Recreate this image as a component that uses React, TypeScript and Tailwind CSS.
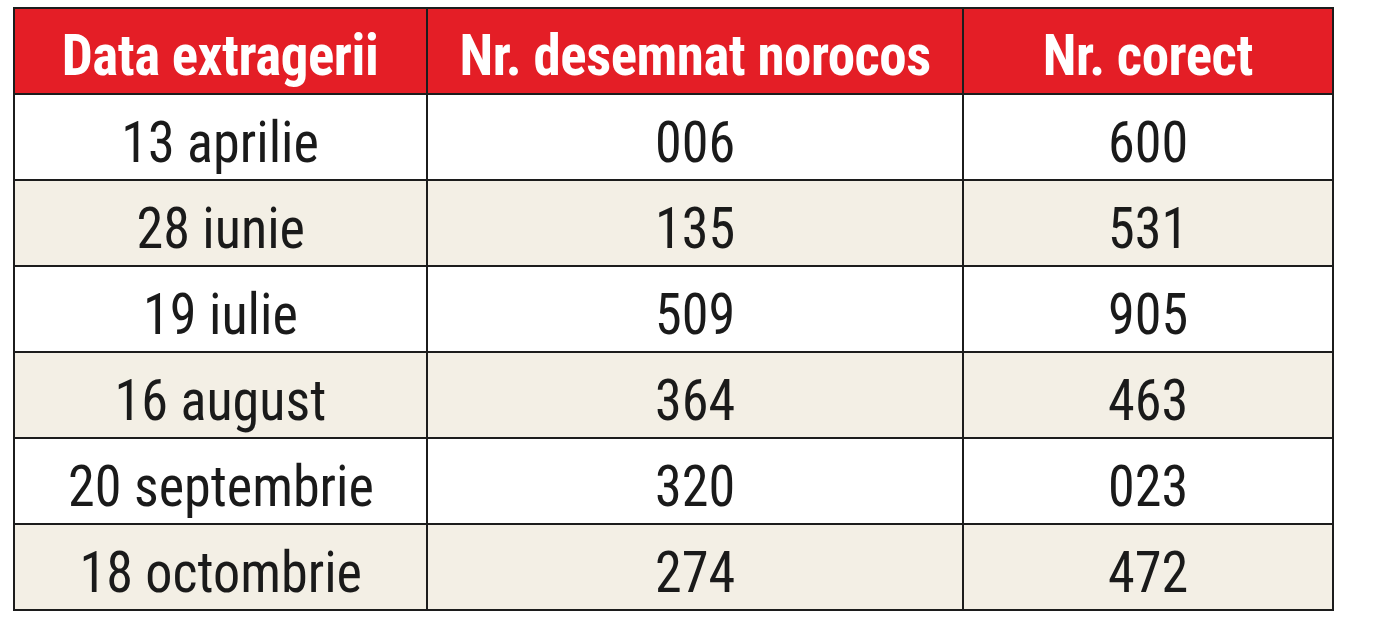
const rows: [string, string, string][] = [
  ['13 aprilie', '006', '600'],
  ['28 iunie', '135', '531'],
  ['19 iulie', '509', '905'],
  ['16 august', '364', '463'],
  ['20 septembrie', '320', '023'],
  ['18 octombrie', '274', '472'],
];

function HeadCell({ children, className }: { children: string; className: string }) {
  return (
    <div className={`flex h-[84px] items-center justify-center pt-[9px] ${className}`}>
      <span className="inline-block origin-center scale-x-[0.965] whitespace-nowrap text-[57px] font-bold leading-none tracking-[-0.5px] text-white">
        {children}
      </span>
    </div>
  );
}

function BodyCell({ children, className }: { children: string; className: string }) {
  return (
    <div className={`flex h-[84px] items-center justify-center pt-[10px] ${className}`}>
      <span className="inline-block origin-center scale-x-[0.95] whitespace-nowrap text-[57px] font-normal leading-none text-[#1a1a1a]">
        {children}
      </span>
    </div>
  );
}

export default function App() {
  return (
    <div className="h-[629px] w-[1400px] bg-white pl-[13px] pt-[7px]" style={{ fontFamily: '"Roboto Condensed", Roboto, sans-serif' }}>
      <div className="w-[1321px] border-2 border-[#1c1c1c]">
        <div className="flex border-b-2 border-[#1c1c1c] bg-[#e41e26]">
          <HeadCell className="w-[413px] border-r-2 border-[#1c1c1c]">Data extragerii</HeadCell>
          <HeadCell className="w-[536px] border-r-2 border-[#1c1c1c]">Nr. desemnat norocos</HeadCell>
          <HeadCell className="flex-1">Nr. corect</HeadCell>
        </div>
        {rows.map((r, i) => (
          <div
            key={r[0]}
            className={`flex ${i < rows.length - 1 ? 'border-b-2 border-[#1c1c1c]' : ''} ${i % 2 === 1 ? 'bg-[#f3efe5]' : 'bg-white'}`}
          >
            <BodyCell className="w-[413px] border-r-2 border-[#1c1c1c]">{r[0]}</BodyCell>
            <BodyCell className="w-[536px] border-r-2 border-[#1c1c1c]">{r[1]}</BodyCell>
            <BodyCell className="flex-1">{r[2]}</BodyCell>
          </div>
        ))}
      </div>
    </div>
  );
}
